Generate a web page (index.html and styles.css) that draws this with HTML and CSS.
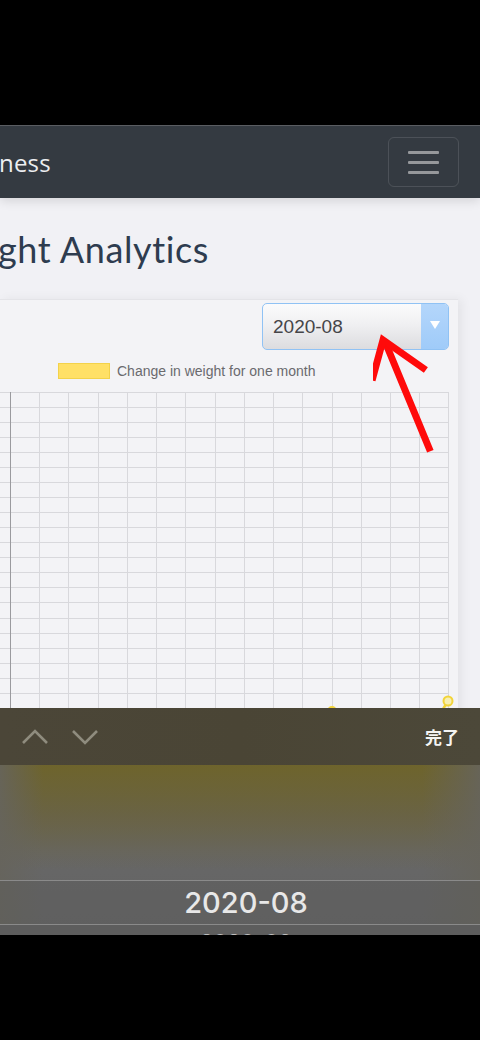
FILE: index.html
```html
<!DOCTYPE html>
<html lang="en">
<head>
<meta charset="utf-8">
<title>Weight Analytics</title>
<link rel="stylesheet" href="styles.css">
</head>
<body>
<div class="device">
  <div class="top-black"></div>
  <div class="screen">
    <nav class="navbar">
      <span class="brand">ness</span>
      <button class="toggler" aria-label="menu">
        <span class="bar"></span><span class="bar"></span><span class="bar"></span>
      </button>
    </nav>
    <main class="content">
      <h1 class="title">ght Analytics</h1>
      <section class="card">
        <div class="card-head">
          <div class="select">
            <span class="select-value">2020-08</span>
            <span class="select-btn">
              <svg width="10" height="8" viewBox="0 0 10 8"><path d="M0 0 H10 L5 8 Z" fill="#fff"/></svg>
            </span>
          </div>
        </div>
        <div class="legend">
          <span class="legend-box"></span>
          <span class="legend-label">Change in weight for one month</span>
        </div>
        <svg class="chart" width="458" height="330" viewBox="0 0 458 330">
          <g stroke="#d8d8dc" stroke-width="1">
            <line x1="0" y1="0.5" x2="449" y2="0.5"/>
            <line x1="0" y1="15.5" x2="449" y2="15.5"/>
            <line x1="0" y1="30.5" x2="449" y2="30.5"/>
            <line x1="0" y1="45.5" x2="449" y2="45.5"/>
            <line x1="0" y1="60.5" x2="449" y2="60.5"/>
            <line x1="0" y1="75.5" x2="449" y2="75.5"/>
            <line x1="0" y1="90.5" x2="449" y2="90.5"/>
            <line x1="0" y1="105.5" x2="449" y2="105.5"/>
            <line x1="0" y1="120.5" x2="449" y2="120.5"/>
            <line x1="0" y1="135.5" x2="449" y2="135.5"/>
            <line x1="0" y1="150.5" x2="449" y2="150.5"/>
            <line x1="0" y1="165.5" x2="449" y2="165.5"/>
            <line x1="0" y1="180.5" x2="449" y2="180.5"/>
            <line x1="0" y1="195.5" x2="449" y2="195.5"/>
            <line x1="0" y1="210.5" x2="449" y2="210.5"/>
            <line x1="0" y1="226.5" x2="449" y2="226.5"/>
            <line x1="0" y1="241.5" x2="449" y2="241.5"/>
            <line x1="0" y1="256.5" x2="449" y2="256.5"/>
            <line x1="0" y1="271.5" x2="449" y2="271.5"/>
            <line x1="0" y1="286.5" x2="449" y2="286.5"/>
            <line x1="0" y1="301.5" x2="449" y2="301.5"/>
            <line x1="0" y1="316.5" x2="449" y2="316.5"/>
            <line x1="39.5" y1="0" x2="39.5" y2="330"/>
            <line x1="68.5" y1="0" x2="68.5" y2="330"/>
            <line x1="98.5" y1="0" x2="98.5" y2="330"/>
            <line x1="127.5" y1="0" x2="127.5" y2="330"/>
            <line x1="156.5" y1="0" x2="156.5" y2="330"/>
            <line x1="185.5" y1="0" x2="185.5" y2="330"/>
            <line x1="215.5" y1="0" x2="215.5" y2="330"/>
            <line x1="244.5" y1="0" x2="244.5" y2="330"/>
            <line x1="273.5" y1="0" x2="273.5" y2="330"/>
            <line x1="302.5" y1="0" x2="302.5" y2="330"/>
            <line x1="332.5" y1="0" x2="332.5" y2="330"/>
            <line x1="361.5" y1="0" x2="361.5" y2="330"/>
            <line x1="390.5" y1="0" x2="390.5" y2="330"/>
            <line x1="419.5" y1="0" x2="419.5" y2="330"/>
            <line x1="448.5" y1="0" x2="448.5" y2="330"/>
          </g>
          <line x1="10.5" y1="0" x2="10.5" y2="330" stroke="#9a9a9e" stroke-width="1"/>
          <path d="M448 309 L440 322" stroke="#f2d43a" stroke-width="2.5" fill="none"/>
          <circle cx="332" cy="319" r="4" fill="#f8efb0" stroke="#f2d43a" stroke-width="2"/>
          <circle cx="448" cy="309" r="4.5" fill="#f8efb0" stroke="#f2d43a" stroke-width="2"/>
        </svg>
      </section>
    </main>
    <svg class="arrow" width="90" height="130" viewBox="0 0 90 130">
      <path d="M56 116 L13 12" stroke="#ff0a0a" stroke-width="7" stroke-linecap="square" fill="none"/>
      <path d="M0 45 L10 8 L50 36" stroke="#ff0a0a" stroke-width="7" stroke-linejoin="miter" stroke-linecap="square" fill="none"/>
    </svg>
    <div class="keyboard">
      <div class="toolbar">
        <div class="nav-arrows">
          <svg width="28" height="16" viewBox="0 0 28 16"><path d="M2 14 L14 2 L26 14" stroke="#8f8c7e" stroke-width="2.6" fill="none"/></svg>
          <svg width="28" height="16" viewBox="0 0 28 16"><path d="M2 2 L14 14 L26 2" stroke="#8f8c7e" stroke-width="2.6" fill="none"/></svg>
        </div>
        <span class="done">完了</span>
      </div>
      <div class="picker">
        <div class="picker-blank"></div>
        <div class="picker-selected">2020-08</div>
        <div class="picker-next">2020-09</div>
      </div>
    </div>
  </div>
  <div class="bottom-black"></div>
</div>
</body>
</html>
```

FILE: styles.css
```css
* { box-sizing: border-box; }
html, body { margin: 0; padding: 0; background: #000; }
body { width: 480px; height: 1040px; overflow: hidden; font-family: "Liberation Sans", Arial, sans-serif; }

.device { display: flex; flex-direction: column; width: 480px; height: 1040px; }
.top-black { height: 125px; background: #000; flex: none; }
.bottom-black { flex: 1; background: #000; }

.screen {
  position: relative;
  height: 810px;
  flex: none;
  overflow: hidden;
  background: #f1f1f5;
}

.navbar {
  height: 73px;
  background: #343a41;
  border-top: 1px solid #5a5d62;
  display: flex;
  align-items: center;
  justify-content: space-between;
  padding-right: 21px;
  box-shadow: 0 3px 10px rgba(0, 0, 0, 0.12);
  position: relative;
  z-index: 1;
}
.brand {
  font-family: "Open Sans", "Noto Sans", sans-serif;
  font-size: 24px;
  color: #eceef0;
  letter-spacing: 0.2px;
  margin-left: -1px;
}
.toggler {
  width: 71px;
  height: 50px;
  border: 1px solid rgba(255, 255, 255, 0.12);
  border-radius: 6px;
  background: transparent;
  display: flex;
  flex-direction: column;
  align-items: center;
  justify-content: center;
  gap: 7px;
  padding: 0;
}
.bar { display: block; width: 31px; height: 3px; background: #96989b; border-radius: 1px; }

.content { padding-top: 29px; }
.title {
  margin: 0 0 28px -2px;
  font-family: Lato, "Open Sans", sans-serif;
  font-weight: 400;
  font-size: 36px;
  line-height: 44px;
  color: #2e3c4f;
  letter-spacing: 0.6px;
}

.card {
  width: 458px;
  background: #f3f3f6;
  border-top: 1px solid #e4e4e8;
  box-shadow: 4px 0 10px rgba(0, 0, 0, 0.06);
  padding: 3px 9px 0 0;
}
.card-head { display: flex; justify-content: flex-end; }
.select {
  width: 187px;
  height: 47px;
  border: 1px solid #90c2f4;
  border-radius: 5px;
  display: flex;
  overflow: hidden;
  background: linear-gradient(#fbfbfc, #f0f0f2 45%, #dcdcdf);
}
.select-value {
  flex: 1;
  display: flex;
  align-items: center;
  padding-left: 10px;
  font-size: 19px;
  color: #454548;
}
.select-btn {
  width: 27px;
  background: linear-gradient(#b4d6fb, #9fcbf9);
  display: flex;
  align-items: center;
  justify-content: center;
  padding-bottom: 4px;
}

.legend {
  display: flex;
  align-items: center;
  margin: 12px 0 0 58px;
  height: 18px;
}
.legend-box {
  width: 52px;
  height: 16px;
  background: #ffe066;
  border: 1px solid #f3d24a;
}
.legend-label { margin-left: 7px; font-size: 14px; color: #6a6a6e; }

.chart { display: block; margin-top: 12px; }

.arrow { position: absolute; left: 373px; top: 207px; }

.keyboard {
  position: absolute;
  left: 0;
  right: 0;
  top: 583px;
  height: 227px;
  display: flex;
  flex-direction: column;
  overflow: hidden;
}
.toolbar {
  flex: none;
  height: 57px;
  background: linear-gradient(90deg, #4b4638, #4a4535 50%, #4c4839);
  display: flex;
  align-items: center;
  justify-content: space-between;
  padding: 0 21px;
}
.nav-arrows { display: flex; gap: 22px; }
.done {
  font-family: "Noto Sans CJK JP", sans-serif;
  font-weight: 700;
  font-size: 17px;
  color: #f4f4f2;
}

.picker {
  flex: 1;
  display: flex;
  flex-direction: column;
  overflow: hidden;
  background:
    linear-gradient(90deg, rgba(102, 100, 92, 0.9), rgba(102, 100, 92, 0) 9%, rgba(102, 100, 92, 0) 88%, rgba(102, 100, 92, 0.9)),
    linear-gradient(rgba(110, 100, 42, 0.95), rgba(106, 98, 60, 0.75) 30%, rgba(103, 103, 103, 0) 62%),
    linear-gradient(#686454, #676767 50%, #636363);
}
.picker-blank { flex: none; height: 115px; }
.picker-selected {
  flex: none;
  height: 45px;
  border-top: 1px solid #8a8a8a;
  border-bottom: 1px solid #8a8a8a;
  background: rgba(90, 90, 90, 0.35);
  display: flex;
  align-items: center;
  justify-content: center;
  font-family: Inter, Roboto, sans-serif;
  font-size: 29px;
  font-weight: 500;
  color: #e8e8e8;
  padding-left: 12px;
}
.picker-next {
  flex: none;
  height: 30px;
  padding-top: 4px;
  text-align: center;
  font-family: Inter, Roboto, sans-serif;
  font-size: 22px;
  color: #bdbdbd;
  padding-left: 12px;
  background: #5d5d5d;
}
```
